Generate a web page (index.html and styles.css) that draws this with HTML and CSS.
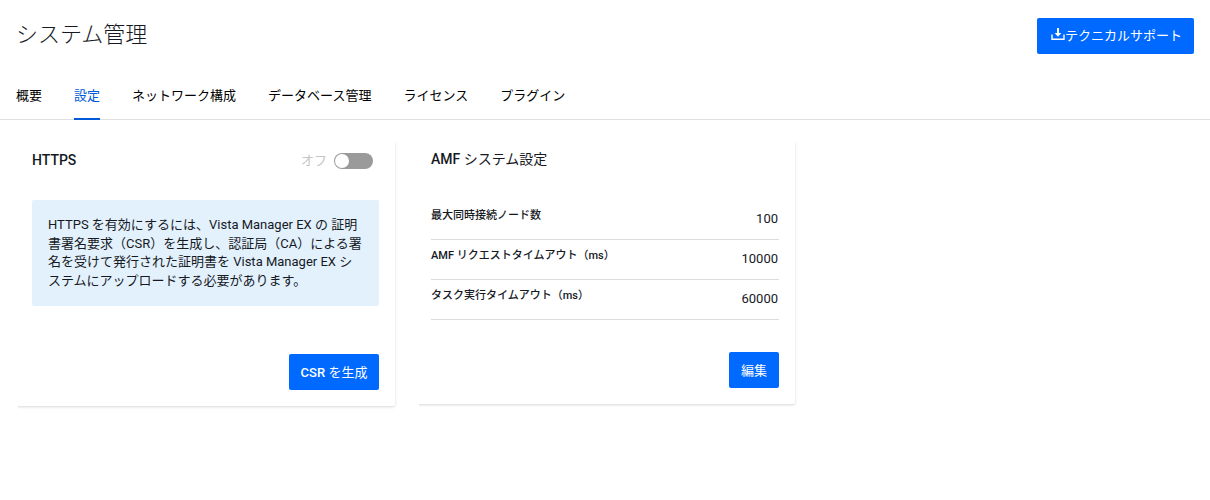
FILE: index.html
```html
<!DOCTYPE html>
<html lang="ja">
<head>
<meta charset="utf-8">
<title>システム管理</title>
<link rel="stylesheet" href="styles.css">
</head>
<body>
<header class="page-header">
  <h1 class="page-title">システム管理</h1>
  <button class="btn btn-support">
    <svg class="btn-icon" viewBox="0 0 14 14" width="14" height="14" fill="none" stroke="#fff" stroke-width="1.4"><path d="M1 7.5V12.3H13V7.5"/><path d="M7 1V8" stroke-width="2"/><path d="M3.6 6H10.4L7 9.8Z" fill="#fff" stroke="none"/></svg>テクニカルサポート
  </button>
</header>
<nav class="tabs">
  <a class="tab">概要</a>
  <a class="tab active">設定</a>
  <a class="tab">ネットワーク構成</a>
  <a class="tab">データベース管理</a>
  <a class="tab">ライセンス</a>
  <a class="tab">プラグイン</a>
</nav>
<main class="cards">
  <section class="card card-https">
    <div class="card-head">
      <h2 class="card-title">HTTPS</h2>
      <div class="toggle-wrap">
        <span class="toggle-label">オフ</span>
        <span class="toggle"><span class="knob"></span></span>
      </div>
    </div>
    <p class="notice">HTTPS を有効にするには、Vista Manager EX の 証明書署名要求（CSR）を生成し、認証局（CA）による署名を受けて発行された証明書を Vista Manager EX システムにアップロードする必要があります。</p>
    <div class="card-foot"><button class="btn btn-csr">CSR <span class="cjk">を生成</span></button></div>
  </section>
  <section class="card card-amf">
    <h2 class="card-title">AMF <span class="cjk">システム設定</span></h2>
    <dl class="rows">
      <div class="row"><dt>最大同時接続ノード数</dt><dd>100</dd></div>
      <div class="row"><dt>AMF リクエストタイムアウト（ms）</dt><dd>10000</dd></div>
      <div class="row"><dt>タスク実行タイムアウト（ms）</dt><dd>60000</dd></div>
    </dl>
    <div class="card-foot"><button class="btn btn-edit">編集</button></div>
  </section>
</main>
</body>
</html>
```
FILE: styles.css
```css
* { box-sizing: border-box; }
html, body { margin: 0; padding: 0; }
body {
  background: #fff;
  color: #16191f;
  font-family: Roboto, "Noto Sans CJK JP", sans-serif;
  font-size: 14px;
  height: 500px;
  overflow: hidden;
}
.page-header {
  display: flex;
  justify-content: space-between;
  align-items: flex-start;
  height: 72px;
  padding: 18px 16px 0;
}
.page-title {
  margin: 0;
  font-size: 22px;
  font-weight: 300;
  line-height: 33px;
}
.btn {
  border: 0;
  border-radius: 2px;
  background: #0069ff;
  color: #fff;
  font-family: inherit;
  font-size: 13px;
  font-weight: 400;
  height: 36px;
  padding: 0 0 2px;
}
.btn-support {
  display: flex;
  align-items: center;
  width: 157px;
  padding: 0 0 4px 14px;
}
.btn-icon { flex: none; }
.btn-csr { font-weight: 500; width: 90px; }
.btn-edit { width: 50px; }
.cjk { font-weight: 400; }
.tabs {
  display: flex;
  gap: 32px;
  height: 48px;
  padding: 0 16px;
  border-bottom: 1px solid #e0e0e0;
}
.tab {
  display: block;
  font-size: 13px;
  line-height: 48px;
  height: 48px;
  color: #000;
  font-weight: 400;
}
.tab.active {
  color: #0059d6;
  border-bottom: 2px solid #0059d6;
}
.cards {
  display: flex;
  align-items: flex-start;
  gap: 22px;
  padding: 22px 0 0 16px;
}
.card {
  background: #fff;
  border-radius: 2px;
  box-shadow: 0 1px 3px rgba(0, 0, 0, .16);
  clip-path: inset(0 -4px -4px 2px);
  display: flex;
  flex-direction: column;
}
.card-https {
  width: 379px;
  height: 264px;
  padding: 0 16px 16px;
}
.card-amf {
  width: 378px;
  height: 262px;
  padding: 0 16px 16px 14px;
}
.card-head {
  display: flex;
  justify-content: space-between;
  align-items: center;
  height: 36px;
  padding-right: 6px;
}
.card-title {
  margin: 0;
  font-size: 14px;
  font-weight: 500;
  line-height: 34px;
}
.toggle-wrap {
  display: flex;
  align-items: center;
  gap: 7px;
  padding-top: 2px;
}
.toggle-label {
  color: #c4c4c4;
  font-size: 13px;
  font-weight: 400;
  line-height: 16px;
}
.toggle {
  display: block;
  position: relative;
  width: 39px;
  height: 16px;
  border-radius: 8px;
  background: #9a9a9a;
}
.knob {
  position: absolute;
  left: 1px;
  top: 1px;
  width: 14px;
  height: 14px;
  border-radius: 50%;
  background: #fff;
}
.notice {
  margin: 22px 0 0;
  padding: 16px;
  height: 106px;
  background: #e3f1fc;
  border-radius: 2px;
  font-size: 13px;
  font-weight: 400;
  line-height: 18.5px;
}
.card-foot {
  margin-top: auto;
  display: flex;
  justify-content: flex-end;
}
.rows { margin: 24px 0 0; }
.row {
  display: flex;
  justify-content: space-between;
  height: 40px;
  border-bottom: 1px solid #dcdcdc;
}
.row dt {
  font-size: 11px;
  font-weight: 500;
  line-height: 32px;
}
.row dd {
  margin: 0;
  padding-right: 1px;
  font-size: 13px;
  line-height: 38px;
}
```
